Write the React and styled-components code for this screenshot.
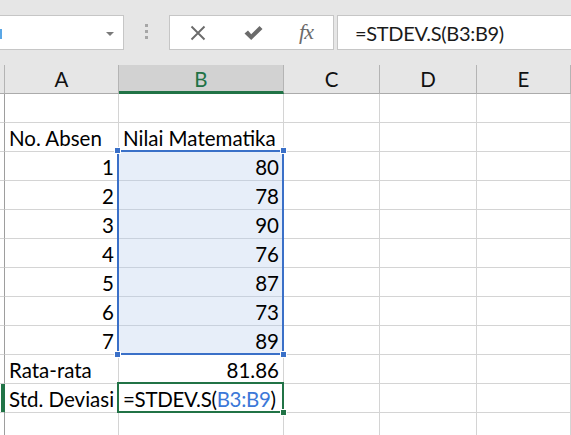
import React from 'react';
import styled, { createGlobalStyle } from 'styled-components';

const GlobalStyle = createGlobalStyle`
  html, body { margin: 0; padding: 0; background: #fff; overflow: hidden; }
  body { font-family: Lato, "Liberation Sans", sans-serif; color: #000; }
`;

const Window = styled.div`
  width: 571px;
  height: 435px;
  overflow: hidden;
  background: #fff;
`;

const TopBar = styled.div`
  height: 65px;
  box-sizing: border-box;
  padding-top: 15px;
  background: #e6e6e6;
  display: flex;
  align-items: flex-start;
`;

const NameBox = styled.div`
  margin-left: -12px;
  width: 136px;
  height: 35px;
  box-sizing: border-box;
  border: 1px solid #c6c6c6;
  background: #fff;
  display: flex;
  align-items: center;
  justify-content: space-between;
  padding: 2px 9px 0 11px;
`;

const Sliver = styled.span`
  width: 2px;
  height: 10px;
  background: #5aa7e6;
`;

const Arrow = styled.span`
  width: 0;
  height: 0;
  border-left: 4px solid transparent;
  border-right: 4px solid transparent;
  border-top: 4px solid #7a7a7a;
`;

const Grip = styled.div`
  width: 45px;
  display: flex;
  flex-direction: column;
  align-items: center;
  gap: 3px;
  padding-top: 9px;
`;

const Dot = styled.span`
  width: 3px;
  height: 3px;
  background: #a6a6a6;
`;

const FxBox = styled.div`
  width: 165px;
  height: 35px;
  box-sizing: border-box;
  border: 1px solid #c6c6c6;
  background: #fff;
  display: grid;
  grid-template-columns: 56px 55px 50px;
  align-items: center;
  justify-items: center;
`;

const FxText = styled.span`
  font-family: "Liberation Serif", serif;
  font-style: italic;
  font-size: 22px;
  color: #6b6b6b;
  letter-spacing: -1px;
  margin-top: -2px;
`;

const FormulaBar = styled.div`
  margin-left: 3px;
  flex: 1;
  margin-right: -10px;
  height: 35px;
  box-sizing: border-box;
  border: 1px solid #c6c6c6;
  border-right: none;
  background: #fff;
  display: flex;
  align-items: center;
  padding-left: 17px;
  font-size: 20px;
  letter-spacing: -0.3px;
  color: #1a1a1a;
`;

const Sheet = styled.div`
  display: grid;
  grid-template-columns: 5px 114px 165px 96px 97px 1fr;
  grid-auto-rows: 29px;
  font-size: 20.5px;
`;

const HeadCell = styled.div`
  box-sizing: border-box;
  background: ${({ $active }) => ($active ? '#d2d2d2' : '#e6e6e6')};
  color: ${({ $active }) => ($active ? '#217346' : '#111')};
  border-right: 1px solid #b4b4b4;
  border-bottom: ${({ $active }) => ($active ? '3px solid #217346' : '1px solid #ababab')};
  display: flex;
  align-items: flex-end;
  justify-content: center;
  padding-bottom: ${({ $active }) => ($active ? '2px' : '4px')};
  line-height: 20px;
`;

const RowHead = styled.div`
  box-sizing: border-box;
  background: #fff;
  border-bottom: 1px solid #d4d4d4;
  border-right: 1px solid ${({ $active }) => ($active ? '#217346' : '#9e9e9e')};
  box-shadow: ${({ $active }) => ($active ? 'inset -3px 0 0 #217346' : 'none')};
`;

const Cell = styled.div`
  position: relative;
  box-sizing: border-box;
  background: ${({ $selected }) => ($selected ? '#e7eef9' : '#fff')};
  border-right: 1px solid ${({ $selected }) => ($selected ? '#c9d1dd' : '#d4d4d4')};
  border-bottom: 1px solid ${({ $selected }) => ($selected ? '#c9d1dd' : '#d4d4d4')};
  display: flex;
  align-items: flex-end;
  justify-content: ${({ $right }) => ($right ? 'flex-end' : 'flex-start')};
  padding: 0 4px 2px 4px;
  line-height: 22px;
  white-space: nowrap;
  color: #000;
`;

const Formula = styled.span`
  letter-spacing: -0.3px;
`;

/* selection outline drawn over the cells it covers */
const RangeBox = styled.div`
  position: absolute;
  top: -2px;
  left: -2px;
  right: -1px;
  height: ${({ $rows }) => $rows * 29 + 2}px;
  box-sizing: border-box;
  border: 2px solid ${({ $color }) => $color};
  pointer-events: none;
  z-index: 2;
`;

const Handle = styled.span`
  position: absolute;
  width: 5px;
  height: 5px;
  background: ${({ $color }) => $color};
  border: 1px solid #fff;
  box-sizing: content-box;
  ${({ $top }) => ($top ? 'top: -5px;' : 'bottom: -5px;')}
  ${({ $left }) => ($left ? 'left: -5px;' : 'right: -5px;')}
`;

const Ref = styled.span`
  color: #3c78d8;
`;

const CloseIcon = () => (
  <svg width="16" height="16" viewBox="0 0 16 16">
    <path d="M1.5 1.5 L14.5 14.5 M14.5 1.5 L1.5 14.5" stroke="#6b6b6b" strokeWidth="1.9" fill="none" />
  </svg>
);

const CheckIcon = () => (
  <svg width="19" height="16" viewBox="0 0 19 16">
    <path d="M0.5 8.5 L4 5.5 L7.2 9.2 L15.5 1 L18.5 4 L7.2 15 Z" fill="#6b6b6b" />
  </svg>
);

const columns = ['A', 'B', 'C', 'D', 'E'];

const rows = [
  [null, null],
  ['No. Absen', 'Nilai Matematika'],
  [1, 80],
  [2, 78],
  [3, 90],
  [4, 76],
  [5, 87],
  [6, 73],
  [7, 89],
  ['Rata-rata', '81.86'],
  ['Std. Deviasi', 'formula'],
  [null, null],
];

const BLUE = '#3a70c8';
const GREEN = '#217346';

const App = () => {
  return (
    <Window>
      <GlobalStyle />
      <TopBar>
        <NameBox>
          <Sliver />
          <Arrow />
        </NameBox>
        <Grip>
          <Dot />
          <Dot />
          <Dot />
        </Grip>
        <FxBox>
          <CloseIcon />
          <CheckIcon />
          <FxText>fx</FxText>
        </FxBox>
        <FormulaBar>=STDEV.S(B3:B9)</FormulaBar>
      </TopBar>
      <Sheet>
        <HeadCell />
        {columns.map((c) => (
          <HeadCell key={c} $active={c === 'B'}>{c}</HeadCell>
        ))}
        {rows.map(([a, b], i) => {
          const n = i + 1;
          const selected = n >= 3 && n <= 9;
          return (
            <React.Fragment key={n}>
              <RowHead $active={n === 11} />
              <Cell $right={typeof a === 'number'}>{a}</Cell>
              <Cell $selected={selected} $right={typeof b === 'number' || n === 10}>
                {b === 'formula' ? (
                  <Formula>=STDEV.S(<Ref>B3:B9</Ref>)</Formula>
                ) : (
                  b
                )}
                {n === 3 && (
                  <RangeBox $rows={7} $color={BLUE}>
                    <Handle $top $left $color={BLUE} />
                    <Handle $top $color={BLUE} />
                    <Handle $left $color={BLUE} />
                    <Handle $color={BLUE} />
                  </RangeBox>
                )}
                {n === 11 && (
                  <RangeBox $rows={1} $color={GREEN}>
                    <Handle $color={GREEN} />
                  </RangeBox>
                )}
              </Cell>
              <Cell />
              <Cell />
              <Cell />
            </React.Fragment>
          );
        })}
      </Sheet>
    </Window>
  );
};

export default App;
